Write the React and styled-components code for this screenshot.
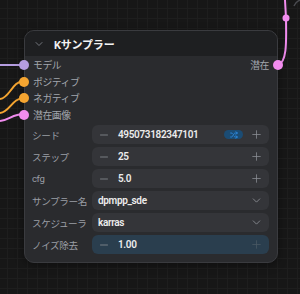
import React from "react";
import styled, { createGlobalStyle } from "styled-components";
import { ChevronDown, Shuffle, Minus, Plus } from "lucide-react";

const GlobalStyle = createGlobalStyle`
  html, body {
    margin: 0;
    padding: 0;
    background: #161616;
  }
  body {
    font-family: "Roboto", "Noto Sans CJK JP", sans-serif;
  }
`;

const Canvas = styled.div`
  position: relative;
  width: 300px;
  height: 294px;
  overflow: hidden;
  background-color: #171717;
  background-image: linear-gradient(#1e1e1e 1px, transparent 1px),
    linear-gradient(90deg, #1e1e1e 1px, transparent 1px);
  background-size: 10px 10px;
  background-position: -3px -2px;
`;

const Wires = styled.svg`
  position: absolute;
  inset: 0;
  pointer-events: none;
`;

const Node = styled.div`
  position: absolute;
  left: 24px;
  top: 30px;
  width: 254px;
  box-sizing: border-box;
  border: 1px solid #3a3b3f;
  border-radius: 10px;
  background: #2a2b2e;
  padding-bottom: 8px;
  box-shadow: 0 2px 10px rgba(0, 0, 0, 0.4);
`;

const Header = styled.div`
  display: flex;
  align-items: center;
  gap: 9px;
  height: 25px;
  padding-left: 8px;
  background: #1e1f21;
  border-radius: 9px 9px 0 0;
  color: #7c7f87;
`;

const Title = styled.span`
  font-size: 11px;
  font-weight: 700;
  color: #f2f2f2;
  font-family: "Roboto", "Noto Sans CJK JP", sans-serif;
  letter-spacing: -0.2px;
`;

const Slots = styled.div`
  display: grid;
  grid-template-columns: 1fr auto;
  padding-top: 1px;
`;

const SlotColumn = styled.div`
  display: flex;
  flex-direction: column;
`;

const Slot = styled.div`
  position: relative;
  height: 16.5px;
  display: flex;
  align-items: center;
  justify-content: ${(p) => (p.right ? "flex-end" : "flex-start")};
  padding: ${(p) => (p.right ? "0 8px 0 0" : "0 0 0 8px")};
  font-size: 9.8px;
  letter-spacing: -0.4px;
  color: #a2a6ad;
  font-family: "Roboto", "Noto Sans CJK JP", sans-serif;
`;

const Dot = styled.span`
  position: absolute;
  top: 50%;
  ${(p) => (p.right ? "right: -6px;" : "left: -6px;")}
  width: 10px;
  height: 10px;
  margin-top: -5px;
  border-radius: 50%;
  background: ${(p) => p.color};
`;

const Widgets = styled.div`
  display: flex;
  flex-direction: column;
  gap: 3px;
  padding: 2px 8px 0 7px;
`;

const Row = styled.div`
  display: grid;
  grid-template-columns: 60px 1fr;
  align-items: center;
`;

const Label = styled.span`
  font-size: 9.6px;
  letter-spacing: -0.4px;
  color: #9a9ea5;
  font-family: "Roboto", "Noto Sans CJK JP", sans-serif;
  white-space: nowrap;
`;

const Control = styled.div`
  display: flex;
  align-items: center;
  height: 19px;
  border-radius: 6px;
  background: ${(p) => (p.fill ? "#2a3e4e" : "#343539")};
  padding: 0 6px;
  gap: 8px;
  color: #8c8f95;
`;

const Value = styled.span`
  flex: 1;
  font-size: 10px;
  font-weight: 600;
  color: #ececec;
  font-family: "Roboto", "Noto Sans CJK JP", sans-serif;
  letter-spacing: -0.35px;
`;

const Badge = styled.span`
  display: flex;
  align-items: center;
  justify-content: center;
  width: 19px;
  height: 9px;
  border-radius: 5px;
  background: #1b4c74;
  color: #2f8fe8;
  margin-right: -1px;
`;

const IconSlot = styled.span`
  display: flex;
  align-items: center;
  color: ${(p) => (p.dim ? "#4a5863" : "#8c8f95")};
`;

const NumberWidget = ({ label, value, badge, fill }) => (
  <Row>
    <Label>{label}</Label>
    <Control fill={fill ? 1 : 0}>
      <IconSlot>
        <Minus size={12} strokeWidth={1.6} />
      </IconSlot>
      <Value>{value}</Value>
      {badge && (
        <Badge>
          <Shuffle size={8} strokeWidth={2.5} />
        </Badge>
      )}
      <IconSlot dim={fill}>
        <Plus size={13} strokeWidth={1.4} />
      </IconSlot>
    </Control>
  </Row>
);

const ComboWidget = ({ label, value }) => (
  <Row>
    <Label>{label}</Label>
    <Control>
      <Value>{value}</Value>
      <IconSlot>
        <ChevronDown size={13} strokeWidth={1.6} />
      </IconSlot>
    </Control>
  </Row>
);

const inputs = [
  { name: "モデル", color: "#b59de0" },
  { name: "ポジティブ", color: "#f5a531" },
  { name: "ネガティブ", color: "#f5a531" },
  { name: "潜在画像", color: "#f18cee" },
];

export default function App() {
  return (
    <Canvas>
      <GlobalStyle />
      <Wires width="300" height="294" viewBox="0 0 300 294">
        <path d="M0 65 H24" stroke="#b59de0" strokeWidth="2" fill="none" />
        <path d="M0 99 C10 98, 12 81, 24 81" stroke="#f5a531" strokeWidth="2" fill="none" />
        <path d="M0 113 C10 112, 12 98, 24 98" stroke="#f5a531" strokeWidth="2" fill="none" />
        <path d="M0 121 C10 120, 12 114, 24 114" stroke="#f18cee" strokeWidth="2" fill="none" />
        <path d="M285 0 L286 18 C286 36, 288 62, 278 65" stroke="#f18cee" strokeWidth="2" fill="none" />
        <circle cx="286" cy="18" r="3.5" fill="#f18cee" />
        <path d="M294 6 Q296 1, 301 0" stroke="#4a4b50" strokeWidth="1.5" fill="none" />
      </Wires>
      <Node>
        <Header>
          <ChevronDown size={12} strokeWidth={1.8} />
          <Title>Kサンプラー</Title>
        </Header>
        <Slots>
          <SlotColumn>
            {inputs.map((s) => (
              <Slot key={s.name}>
                <Dot color={s.color} />
                {s.name}
              </Slot>
            ))}
          </SlotColumn>
          <SlotColumn>
            <Slot right>
              潜在
              <Dot right color="#f18cee" />
            </Slot>
          </SlotColumn>
        </Slots>
        <Widgets>
          <NumberWidget label="シード" value="495073182347101" badge />
          <NumberWidget label="ステップ" value="25" />
          <NumberWidget label="cfg" value="5.0" />
          <ComboWidget label="サンプラー名" value="dpmpp_sde" />
          <ComboWidget label="スケジューラ" value="karras" />
          <NumberWidget label="ノイズ除去" value="1.00" fill />
        </Widgets>
      </Node>
    </Canvas>
  );
}
